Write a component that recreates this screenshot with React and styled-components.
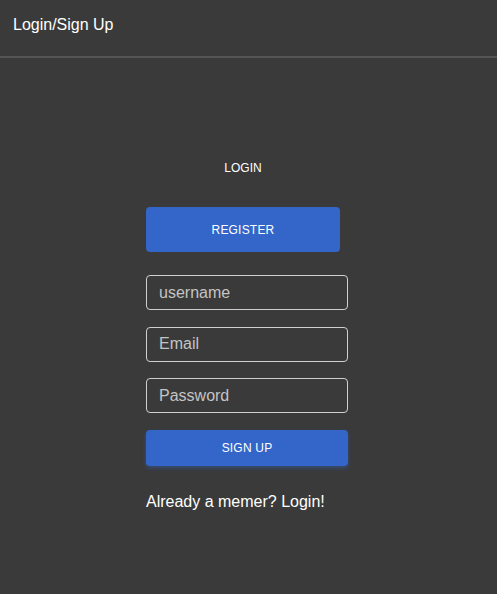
import React from "react";
import styled, { createGlobalStyle } from "styled-components";

const GlobalStyle = createGlobalStyle`
  html, body {
    margin: 0;
    padding: 0;
    background: #3a3a3a;
    min-height: 100%;
  }
  body {
    font-family: "Liberation Sans", Arial, sans-serif;
    color: #ffffff;
  }
`;

const Page = styled.div`
  min-height: 594px;
  background: #3a3a3a;
`;

const Header = styled.header`
  box-sizing: border-box;
  height: 58px;
  padding: 16px 13px 0;
  border-bottom: 2px solid #555555;
  font-size: 16px;
  line-height: 18px;
`;

const Main = styled.main`
  display: flex;
  flex-direction: column;
  align-items: flex-start;
  padding: 103px 0 0 146px;
`;

const Tab = styled.div`
  width: 194px;
  text-align: center;
  font-size: 12px;
  line-height: 14px;
  margin-bottom: 32px;
`;

const Button = styled.button`
  box-sizing: border-box;
  width: ${(p) => p.$width}px;
  height: ${(p) => p.$height}px;
  border: none;
  border-radius: 4px;
  background: #3366c8;
  color: #ffffff;
  font-family: "Liberation Sans", Arial, sans-serif;
  font-size: 12px;
  letter-spacing: 0.2px;
  text-transform: uppercase;
  box-shadow: ${(p) => (p.$glow ? "0 2px 4px rgba(51, 102, 200, 0.45)" : "none")};
  cursor: pointer;
`;

const Form = styled.form`
  display: flex;
  flex-direction: column;
  gap: 16.5px;
  margin-top: 23px;
`;

const Input = styled.input`
  box-sizing: border-box;
  width: 202px;
  height: 35px;
  padding: 0 12px;
  background: transparent;
  border: 1px solid #cfcfcf;
  border-radius: 4px;
  color: #ffffff;
  font-family: "Liberation Sans", Arial, sans-serif;
  font-size: 16px;
  outline: none;

  &::placeholder {
    color: #c4c4c4;
  }
`;

const Switch = styled.p`
  margin: 27px 0 0;
  font-size: 16px;
  line-height: 18px;
`;

export default function App() {
  return (
    <Page>
      <GlobalStyle />
      <Header>Login/Sign Up</Header>
      <Main>
        <Tab>LOGIN</Tab>
        <Button $width={194} $height={45}>
          Register
        </Button>
        <Form onSubmit={(e) => e.preventDefault()}>
          <Input placeholder="username" />
          <Input placeholder="Email" />
          <Input type="password" placeholder="Password" />
          <Button $width={202} $height={36} $glow>
            Sign Up
          </Button>
        </Form>
        <Switch>Already a memer? Login!</Switch>
      </Main>
    </Page>
  );
}
